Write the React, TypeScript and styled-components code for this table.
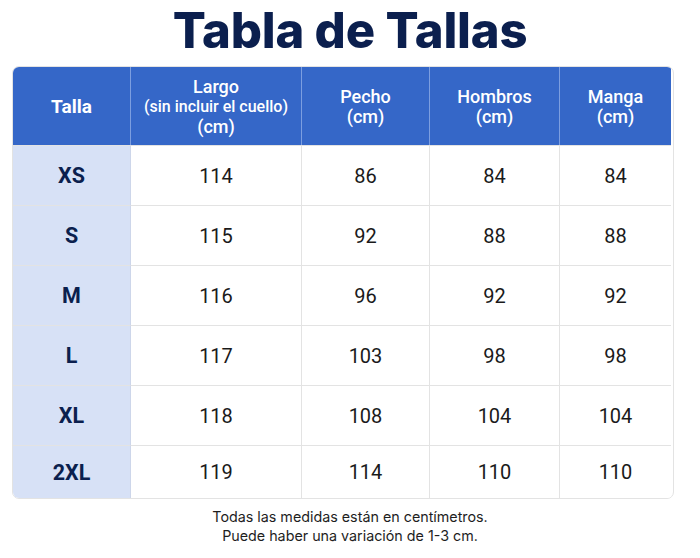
import styled, { createGlobalStyle } from "styled-components";

const GlobalStyle = createGlobalStyle`
    body {
        margin: 0;
        background: #ffffff;
        font-family: Roboto, "Liberation Sans", Arial, sans-serif;
    }
`;

const columns = [
    { key: "talla", width: 118, label: "Talla", note: "", unit: false },
    { key: "largo", width: 171, label: "Largo", note: "(sin incluir el cuello)", unit: true },
    { key: "pecho", width: 128, label: "Pecho", note: "", unit: true },
    { key: "hombros", width: 130, label: "Hombros", note: "", unit: true },
    { key: "manga", width: 111, label: "Manga", note: "", unit: true }
];

const rows = [
    { size: "XS", values: [114, 86, 84, 84] },
    { size: "S", values: [115, 92, 88, 88] },
    { size: "M", values: [116, 96, 92, 92] },
    { size: "L", values: [117, 103, 98, 98] },
    { size: "XL", values: [118, 108, 104, 104] },
    { size: "2XL", values: [119, 114, 110, 110] }
];

const Page = styled.div`
    width: 700px;
    height: 558px;
    display: flex;
    flex-direction: column;
    align-items: center;
    overflow: hidden;
`;

const Title = styled.h1`
    margin: 3px 0 0;
    height: 63px;
    font-family: Inter, Roboto, sans-serif;
    font-size: 49px;
    line-height: 56px;
    font-weight: 800;
    color: #0b1f4e;
    letter-spacing: -0.2px;
`;

const Table = styled.div`
    align-self: flex-start;
    margin-left: 12px;
    width: 660px;
    border: 1px solid #e3e3e3;
    border-radius: 7px;
    overflow: hidden;
    display: grid;
    grid-template-columns: ${columns.map((c) => `${c.width}px`).join(" ")};
`;

const HeadCell = styled.div<{ $last?: boolean }>`
    height: 78px;
    background: #3567c8;
    color: #ffffff;
    font-weight: 500;
    display: flex;
    flex-direction: column;
    align-items: center;
    justify-content: center;
    text-align: center;
    border-right: ${(p) => (p.$last ? "none" : "1px solid #7c9ee0")};
    box-sizing: border-box;
    padding-top: 2px;
`;

const HeadLabel = styled.span<{ $big?: boolean }>`
    font-size: ${(p) => (p.$big ? "19px" : "18px")};
    font-weight: ${(p) => (p.$big ? 700 : 500)};
    line-height: 20px;
`;

const HeadSub = styled.span<{ $small?: boolean }>`
    font-size: ${(p) => (p.$small ? "16px" : "18px")};
    line-height: 20px;
`;

const SizeCell = styled.div<{ $height: number }>`
    height: ${(p) => p.$height}px;
    background: #d7e1f6;
    color: #0b1f4e;
    font-size: 21.5px;
    font-weight: 700;
    display: flex;
    align-items: center;
    justify-content: center;
    border-top: 1px solid #e3e3e3;
    border-right: 1px solid #cdd6ea;
    box-sizing: border-box;
`;

const ValueCell = styled.div<{ $height: number; $last?: boolean }>`
    height: ${(p) => p.$height}px;
    background: #ffffff;
    color: #1a1a1a;
    font-size: 20px;
    display: flex;
    align-items: center;
    justify-content: center;
    border-top: 1px solid #e3e3e3;
    border-right: ${(p) => (p.$last ? "none" : "1px solid #e3e3e3")};
    box-sizing: border-box;
`;

const Note = styled.p`
    margin: 8px 0 0;
    font-family: Inter, Roboto, sans-serif;
    font-size: 14.3px;
    line-height: 19px;
    color: #1e1e1e;
    text-align: center;
`;

const App = () => {
    return (
        <Page>
            <GlobalStyle />
            <Title>Tabla de Tallas</Title>
            <Table>
                {columns.map((col, idx) => (
                    <HeadCell key={col.key} $last={idx === columns.length - 1}>
                        <HeadLabel $big={idx === 0}>{col.label}</HeadLabel>
                        {col.note && <HeadSub $small>{col.note}</HeadSub>}
                        {col.unit && <HeadSub>(cm)</HeadSub>}
                    </HeadCell>
                ))}
                {rows.map((row, rIdx) => {
                    const h = rIdx === rows.length - 1 ? 53 : 60;
                    return [
                        <SizeCell key={row.size} $height={h}>
                            {row.size}
                        </SizeCell>,
                        ...row.values.map((v, vIdx) => (
                            <ValueCell
                                key={`${row.size}-${vIdx}`}
                                $height={h}
                                $last={vIdx === row.values.length - 1}
                            >
                                {v}
                            </ValueCell>
                        ))
                    ];
                })}
            </Table>
            <Note>
                Todas las medidas están en centímetros.
                <br />
                Puede haber una variación de 1-3 cm.
            </Note>
        </Page>
    );
};

export default App;
